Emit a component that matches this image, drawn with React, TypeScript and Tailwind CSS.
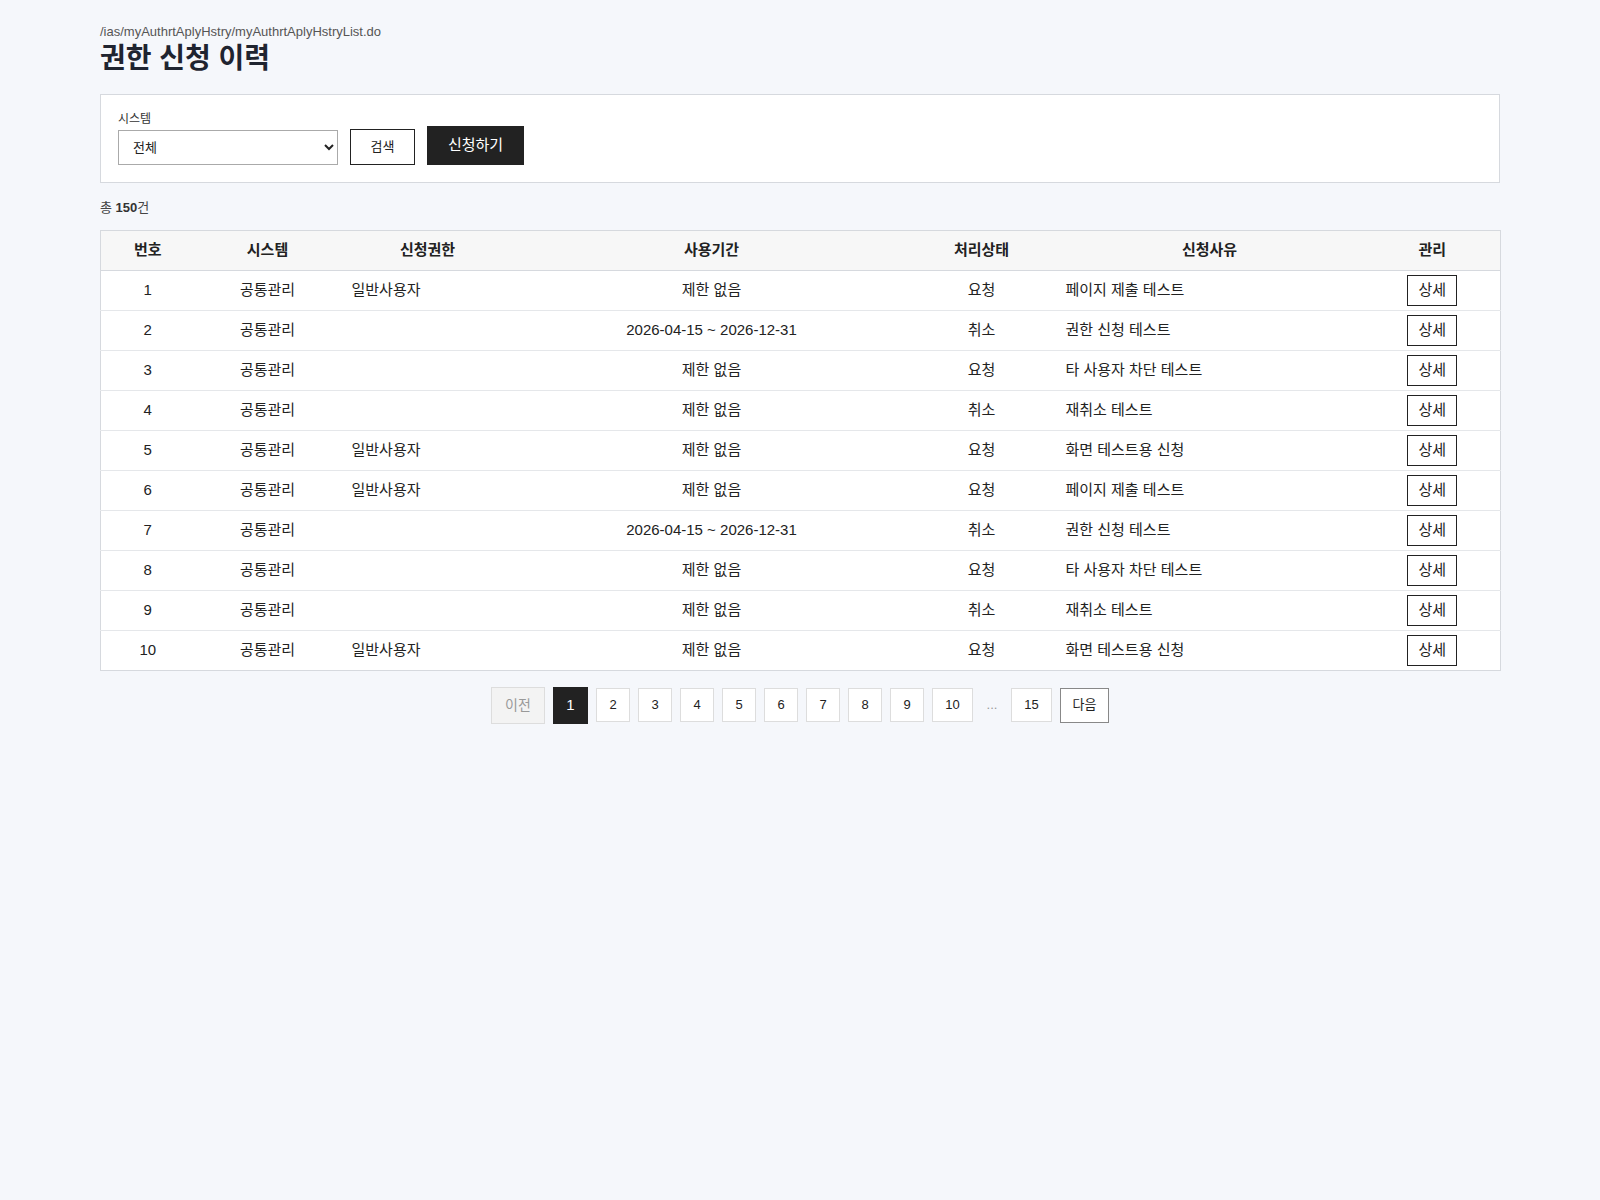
import React from "react";

const rows = [
  [1, "일반사용자", "제한 없음", "요청", "페이지 제출 테스트"],
  [2, "", "2026-04-15 ~ 2026-12-31", "취소", "권한 신청 테스트"],
  [3, "", "제한 없음", "요청", "타 사용자 차단 테스트"],
  [4, "", "제한 없음", "취소", "재취소 테스트"],
  [5, "일반사용자", "제한 없음", "요청", "화면 테스트용 신청"],
  [6, "일반사용자", "제한 없음", "요청", "페이지 제출 테스트"],
  [7, "", "2026-04-15 ~ 2026-12-31", "취소", "권한 신청 테스트"],
  [8, "", "제한 없음", "요청", "타 사용자 차단 테스트"],
  [9, "", "제한 없음", "취소", "재취소 테스트"],
  [10, "일반사용자", "제한 없음", "요청", "화면 테스트용 신청"],
];

export default function App() {
  return (
    <div
      className="min-h-[1200px] bg-[#f5f7fb] px-[100px] pt-[24px] text-[#222]"
      style={{ fontFamily: '"Liberation Sans", "Noto Sans CJK KR", sans-serif' }}
    >
      <div className="text-[13px] text-[#555] leading-[16px]">/ias/myAuthrtAplyHstry/myAuthrtAplyHstryList.do</div>
      <h1 className="text-[28px] font-bold text-[#1f2430] leading-[34px] mt-[2px]">권한 신청 이력</h1>
      <div className="mt-[18px] w-[1400px] h-[89px] bg-white border border-[#d6d9de] px-[17px] pt-[16px]">
        <div className="text-[12px] text-[#333] leading-[16px]">시스템</div>
        <div className="flex items-center mt-[2px]">
          <select className="w-[220px] h-[35px] border border-[#aaa] bg-white text-[13px] px-[10px]">
            <option>전체</option>
          </select>
          <button className="ml-[12px] w-[65px] h-[36px] border border-[#222] bg-white text-[13px]">검색</button>
          <button className="ml-[12px] w-[97px] h-[39px] bg-[#222] text-white text-[15px] -mt-[4px]">신청하기</button>
        </div>
      </div>
      <div className="mt-[15px] text-[13px] text-[#444]">총 <b className="text-[#333]">150</b>건</div>
      <table className="mt-[12px] w-[1400px] bg-white border border-[#d6d9de] border-collapse table-fixed text-[15px]">
        <colgroup>
          <col className="w-[94px]" />
          <col className="w-[146px]" />
          <col className="w-[174px]" />
          <col className="w-[394px]" />
          <col className="w-[146px]" />
          <col className="w-[310px]" />
          <col className="w-[136px]" />
        </colgroup>
        <thead>
          <tr className="h-[40px] bg-[#f7f7f7] border-b border-[#d6d9de] text-[15px] font-bold">
            {["번호", "시스템", "신청권한", "사용기간", "처리상태", "신청사유", "관리"].map((h) => (
              <th key={h} className="text-center font-bold">{h}</th>
            ))}
          </tr>
        </thead>
        <tbody>
          {rows.map((r) => (
            <tr key={r[0] as number} className="h-[40px] border-b border-[#e5e7ea] last:border-b-0">
              <td className="text-center">{r[0]}</td>
              <td className="text-center">공통관리</td>
              <td className="pl-[11px]">{r[1]}</td>
              <td className="text-center">{r[2]}</td>
              <td className="text-center">{r[3]}</td>
              <td className="pl-[11px]">{r[4]}</td>
              <td className="text-center">
                <button className="w-[50px] h-[31px] border border-[#222] bg-white text-[15px]">상세</button>
              </td>
            </tr>
          ))}
        </tbody>
      </table>
      <div className="w-[1400px] flex justify-center items-center gap-[8px] mt-[16px] text-[13px]">
        <span className="w-[54px] h-[37px] flex items-center justify-center border border-[#ddd] bg-[#f3f3f3] text-[#999] text-[14px]">이전</span>
        <span className="w-[35px] h-[37px] flex items-center justify-center bg-[#222] text-white text-[15px]">1</span>
        {["2", "3", "4", "5", "6", "7", "8", "9"].map((n) => (
          <span key={n} className="w-[34px] h-[34px] flex items-center justify-center border border-[#ddd] bg-white">{n}</span>
        ))}
        <span className="w-[41px] h-[34px] flex items-center justify-center border border-[#ddd] bg-white">10</span>
        <span className="w-[22px] text-center text-[#999]">...</span>
        <span className="w-[41px] h-[34px] flex items-center justify-center border border-[#ddd] bg-white">15</span>
        <span className="w-[49px] h-[35px] flex items-center justify-center border border-[#888] bg-white">다음</span>
      </div>
    </div>
  );
}
